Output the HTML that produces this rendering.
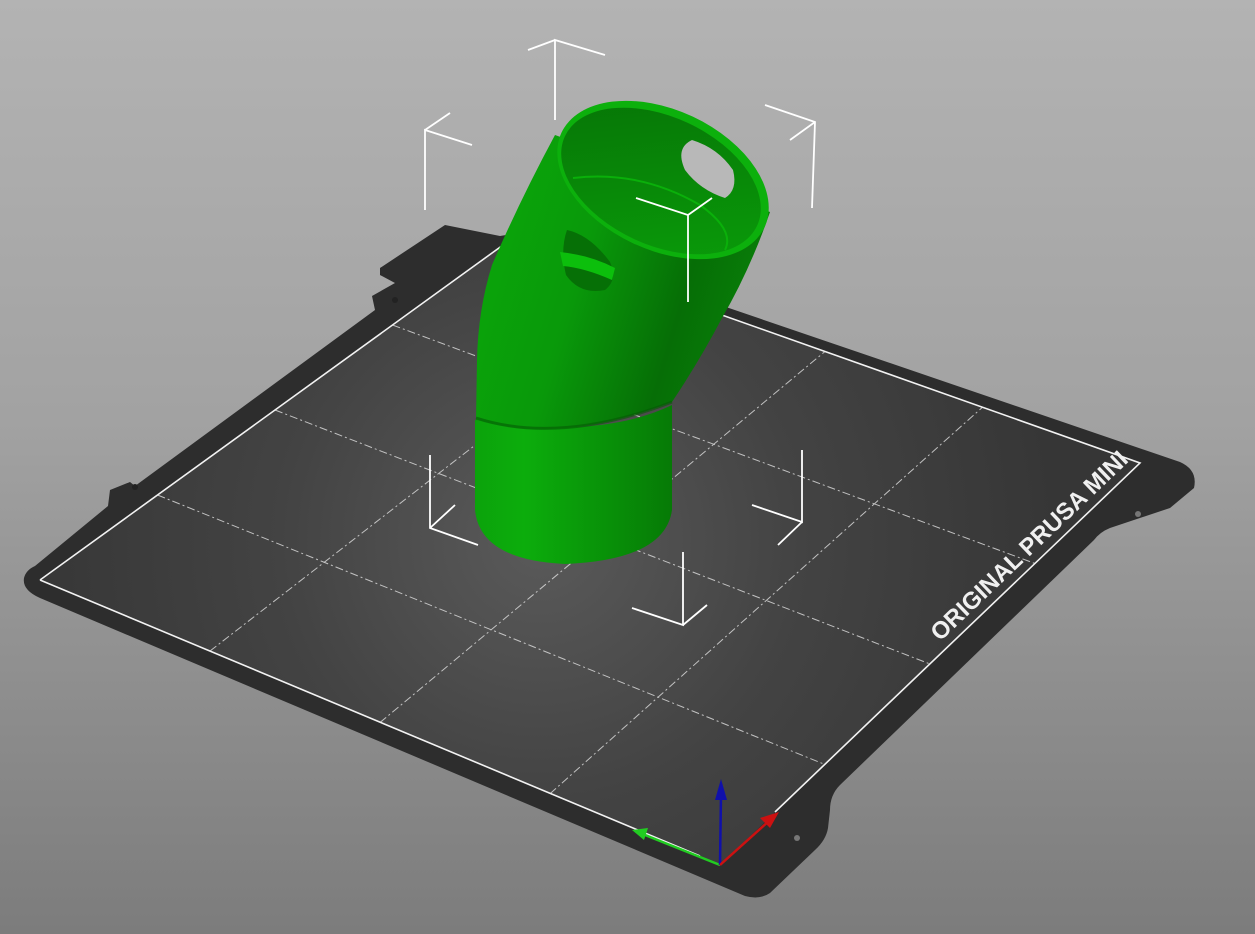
<!DOCTYPE html>
<html><head><meta charset="utf-8"><style>
html,body{margin:0;padding:0;width:1255px;height:934px;overflow:hidden;background:#9a9a9a}
svg{display:block}
</style></head><body>
<svg width="1255" height="934" viewBox="0 0 1255 934" xmlns="http://www.w3.org/2000/svg">
<defs>
<linearGradient id="bg" x1="0" y1="0" x2="0" y2="1">
<stop offset="0" stop-color="#b3b3b3"/><stop offset="0.45" stop-color="#a2a2a2"/><stop offset="1" stop-color="#7c7c7c"/>
</linearGradient>
<radialGradient id="bed" cx="540" cy="540" r="520" gradientUnits="userSpaceOnUse">
<stop offset="0" stop-color="#5a5a5a"/><stop offset="0.5" stop-color="#434343"/><stop offset="1" stop-color="#363636"/>
</radialGradient>
<linearGradient id="g1" x1="0" y1="0" x2="1" y2="0">
<stop offset="0" stop-color="#0ba30b"/><stop offset="0.25" stop-color="#0cad0c"/><stop offset="0.7" stop-color="#088f08"/><stop offset="1" stop-color="#067a06"/>
</linearGradient>
<linearGradient id="g2" x1="0" y1="0" x2="1" y2="0.3">
<stop offset="0" stop-color="#0aa90a"/><stop offset="0.45" stop-color="#09990a"/><stop offset="0.8" stop-color="#066e06"/><stop offset="1" stop-color="#087c08"/>
</linearGradient>
<linearGradient id="gin" x1="0" y1="0" x2="1" y2="1">
<stop offset="0" stop-color="#067306"/><stop offset="0.5" stop-color="#088808"/><stop offset="1" stop-color="#0a9e0a"/>
</linearGradient>
</defs>
<rect width="1255" height="934" fill="url(#bg)"/>
<path d="M445,225 L500,236 L512,234 L1180,462 Q1198,470 1194,488 L1170,508 L1110,528 Q1100,532 1094,540 L840,785 Q830,795 830,810 L828,828 Q826,840 815,850 L770,893 Q760,900 745,896 L40,598 Q22,590 24,578 Q26,570 35,566 L108,506 L110,490 L130,482 L135,486 L375,310 L372,296 L395,283 L380,275 L380,268 Z" fill="#2d2d2d"/>
<path d="M40,580 L510,240 L1140,463 L720,865 Z" fill="url(#bed)"/>
<g stroke="#d8d8d8" stroke-width="1" stroke-dasharray="8,3,2,3" fill="none" opacity="0.85">
<line x1="210" y1="651" x2="667.5" y2="295.75"/>
<line x1="380" y1="722.5" x2="825" y2="351.5"/>
<line x1="550" y1="793.75" x2="982.5" y2="407.25"/>
<line x1="157.5" y1="495" x2="825" y2="764.5"/>
<line x1="275" y1="410" x2="930" y2="664"/>
<line x1="392.5" y1="325" x2="1035" y2="563.5"/>
</g>
<path d="M40,580 L510,240 L1140,463 L775,812 M40,580 L700,856" stroke="#f2f2f2" stroke-width="1.6" fill="none"/>
<text x="0" y="0" transform="translate(940,642) rotate(-43.7)" font-family="Liberation Sans, sans-serif" font-weight="bold" font-size="24" fill="#f0f0f0" textLength="262" lengthAdjust="spacingAndGlyphs">ORIGINAL PRUSA MINI</text>
<circle cx="1138" cy="514" r="3" fill="#777"/>
<circle cx="797" cy="838" r="3" fill="#777"/>
<circle cx="135" cy="487" r="3" fill="#222"/>
<circle cx="395" cy="300" r="3" fill="#222"/>
<g stroke="#fff" stroke-width="1.8" fill="none">
<path d="M430,455 L430,528 L478,545 M430,528 L455,505"/>
<path d="M802,450 L802,522 L752,505 M802,522 L778,545"/>
<path d="M683,552 L683,625 L632,608 M683,625 L707,605"/>
</g>
<path d="M475,420 L475,510 Q480,560 565,564 Q665,560 672,510 L672,405 Q600,440 475,420 Z" fill="url(#g1)"/>
<path d="M555,135 Q520,200 492,265 Q478,310 477,360 L476,420 Q560,445 672,402 Q700,360 722,318 Q750,270 770,212 Z" fill="url(#g2)"/>
<path d="M476,418 Q560,445 672,402" stroke="#055a05" stroke-width="3" fill="none" opacity="0.6"/>
<ellipse cx="663" cy="180" rx="112" ry="70" transform="rotate(25 663 180)" fill="#0cb00c"/>
<ellipse cx="661" cy="181" rx="106" ry="64" transform="rotate(25 661 181)" fill="url(#gin)"/>
<path d="M573,178 Q640,170 700,205 Q735,230 725,250" stroke="#0ab00a" stroke-width="2" fill="none"/>
<path d="M692,140 Q718,148 733,170 Q738,190 725,198 Q700,190 685,170 Q675,148 692,140 Z" fill="#b8b8b8"/>
<path d="M567,230 Q560,250 566,275 Q580,295 605,290 Q618,280 610,262 Q590,235 567,230 Z" fill="#067006"/>
<path d="M560,252 Q590,255 615,268 L612,280 Q585,268 563,266 Z" fill="#0cbf0c"/>
<g stroke="#fff" stroke-width="1.8" fill="none">
<path d="M555,120 L555,40 L605,55 M555,40 L528,50"/>
<path d="M425,210 L425,130 L472,145 M425,130 L450,113"/>
<path d="M812,208 L815,122 L765,105 M815,122 L790,140"/>
<path d="M688,302 L688,215 L636,198 M688,215 L712,198"/>
</g>
<line x1="720" y1="865" x2="640" y2="833" stroke="#22cc22" stroke-width="2.5"/>
<path d="M632,830 L648,828 L644,840 Z" fill="#22cc22"/>
<line x1="720" y1="865" x2="721" y2="795" stroke="#1010aa" stroke-width="2.5"/>
<path d="M721,779 L715,800 L727,800 Z" fill="#1010aa"/>
<line x1="720" y1="865" x2="770" y2="820" stroke="#cc1111" stroke-width="2.5"/>
<path d="M779,812 L760,818 L770,828 Z" fill="#cc1111"/>
</svg>
</body></html>
